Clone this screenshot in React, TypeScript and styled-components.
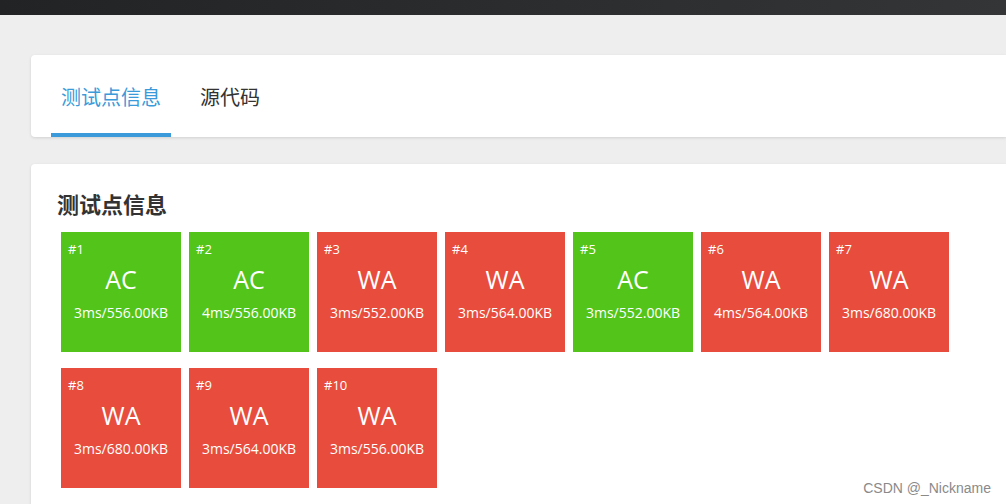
import React from 'react'
import styled, {createGlobalStyle} from 'styled-components'

const GlobalStyle = createGlobalStyle`
  html, body {
    margin: 0;
    padding: 0;
    background: #eeeeee;
    font-family: "Open Sans", "Noto Sans CJK SC", sans-serif;
  }
`

const Page = styled.div`
  width: 1006px;
  height: 504px;
  overflow: hidden;
  position: relative;
`

const TopBar = styled.div`
  height: 15px;
  background: linear-gradient(90deg, #222325, #343537);
`

const Content = styled.div`
  padding: 40px 0 0 31px;
  display: flex;
  flex-direction: column;
  gap: 27px;
`

const Card = styled.div`
  background: #fff;
  border-radius: 4px 0 0 4px;
  box-shadow: 0 1px 3px rgba(0, 0, 0, 0.12);
`

const TabBar = styled(Card)`
  height: 82px;
  display: flex;
  align-items: stretch;
  padding-left: 20px;
  gap: 19px;
`

const Tab = styled.div<{$active?: boolean}>`
  display: flex;
  align-items: center;
  padding: 0 10px;
  font-size: 20px;
  color: ${p => (p.$active ? '#3b9ad9' : '#333')};
  border-bottom: 4px solid ${p => (p.$active ? '#3b9ad9' : 'transparent')};
  box-sizing: border-box;
  padding-top: 4px;
`

const Panel = styled(Card)`
  padding: 26px 26px 30px;
  min-height: 320px;
`

const Title = styled.h2`
  margin: 0 0 14px;
  font-size: 22px;
  font-weight: 700;
  color: #333;
  line-height: 28px;
`

const Grid = styled.div`
  display: flex;
  flex-wrap: wrap;
  gap: 16px 8px;
  padding-left: 4px;
  width: 900px;
`

const Box = styled.div<{$ok: boolean}>`
  width: 120px;
  height: 120px;
  background: ${p => (p.$ok ? '#52c41a' : '#e74c3c')};
  color: #fff;
  position: relative;
  display: flex;
  flex-direction: column;
  align-items: center;
`

const Num = styled.span`
  position: absolute;
  left: 7px;
  top: 8px;
  font-size: 13px;
`

const Verdict = styled.div`
  margin-top: 31px;
  font-size: 25px;
  line-height: 32px;
`

const Stat = styled.div`
  margin-top: 8px;
  font-size: 14px;
  line-height: 20px;
`

const Watermark = styled.div`
  position: absolute;
  right: 15px;
  bottom: 8px;
  font-family: "Liberation Sans", Arial, sans-serif;
  font-size: 14px;
  color: #8a8a8a;
`

const cases = [
  ['AC', '3ms/556.00KB'],
  ['AC', '4ms/556.00KB'],
  ['WA', '3ms/552.00KB'],
  ['WA', '3ms/564.00KB'],
  ['AC', '3ms/552.00KB'],
  ['WA', '4ms/564.00KB'],
  ['WA', '3ms/680.00KB'],
  ['WA', '3ms/680.00KB'],
  ['WA', '3ms/564.00KB'],
  ['WA', '3ms/556.00KB'],
]

export default function App() {
  return (
    <Page>
      <GlobalStyle />
      <TopBar />
      <Content>
        <TabBar>
          <Tab $active>测试点信息</Tab>
          <Tab>源代码</Tab>
        </TabBar>
        <Panel>
          <Title>测试点信息</Title>
          <Grid>
            {cases.map(([v, s], i) => (
              <Box key={i} $ok={v === 'AC'}>
                <Num>#{i + 1}</Num>
                <Verdict>{v}</Verdict>
                <Stat>{s}</Stat>
              </Box>
            ))}
          </Grid>
        </Panel>
      </Content>
      <Watermark>CSDN @_Nickname</Watermark>
    </Page>
  )
}
